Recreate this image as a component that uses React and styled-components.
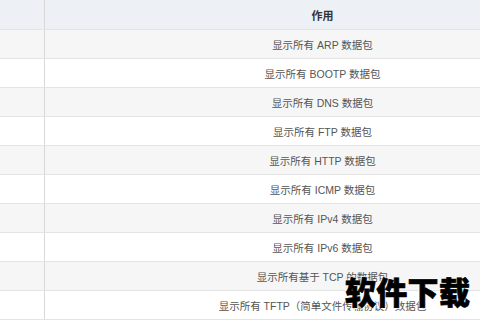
import styled, { createGlobalStyle } from 'styled-components'

const GlobalStyle = createGlobalStyle`
  html, body {
    margin: 0;
    padding: 0;
    background: #fff;
    overflow: hidden;
  }
  body {
    font-family: "Liberation Sans", "Noto Sans CJK SC", sans-serif;
  }
`

const Page = styled.div`
  position: relative;
  width: 480px;
  height: 320px;
  overflow: hidden;
  background: #fff;
`

const Table = styled.div`
  width: 600px;
  display: flex;
  flex-direction: column;
`

const Row = styled.div`
  display: grid;
  grid-template-columns: 45px 1fr;
  height: ${p => (p.$head ? '30px' : '29px')};
  box-sizing: border-box;
  border-bottom: 1px solid ${p => (p.$head ? '#dfe5ec' : '#e4e4e4')};
  background: ${p => (p.$head ? '#edf1f5' : p.$striped ? '#f6f6f6' : '#ffffff')};
`

const Cell = styled.div`
  display: flex;
  align-items: center;
  justify-content: center;
  font-size: ${p => (p.$head ? '11px' : '10.5px')};
  font-weight: ${p => (p.$head ? 700 : 400)};
  color: ${p => (p.$head ? '#333' : '#555')};
  white-space: nowrap;

  &:first-child {
    border-right: 1px solid #d8d8d8;
  }
`

const Watermark = styled.div`
  position: absolute;
  left: 345px;
  top: 275px;
  font-family: "Noto Sans CJK SC", sans-serif;
  font-size: 31px;
  font-weight: 900;
  line-height: 31px;
  letter-spacing: 0.3px;
  color: #000;
  -webkit-text-stroke: 0.7px #000;
  text-shadow: 0 0 2px #fff, 0 0 2px #fff, 1px 1px 0 #fff, -1px -1px 0 #fff;
`

const rows = [
  '显示所有 ARP 数据包',
  '显示所有 BOOTP 数据包',
  '显示所有 DNS 数据包',
  '显示所有 FTP 数据包',
  '显示所有 HTTP 数据包',
  '显示所有 ICMP 数据包',
  '显示所有 IPv4 数据包',
  '显示所有 IPv6 数据包',
  '显示所有基于 TCP 的数据包',
  '显示所有 TFTP（简单文件传输协议）数据包',
]

export default function App() {
  return (
    <Page>
      <GlobalStyle />
      <Table>
        <Row $head>
          <Cell $head></Cell>
          <Cell $head>作用</Cell>
        </Row>
        {rows.map((text, i) => (
          <Row key={i} $striped={i % 2 === 0}>
            <Cell></Cell>
            <Cell>{text}</Cell>
          </Row>
        ))}
      </Table>
      <Watermark>软件下载</Watermark>
    </Page>
  )
}
